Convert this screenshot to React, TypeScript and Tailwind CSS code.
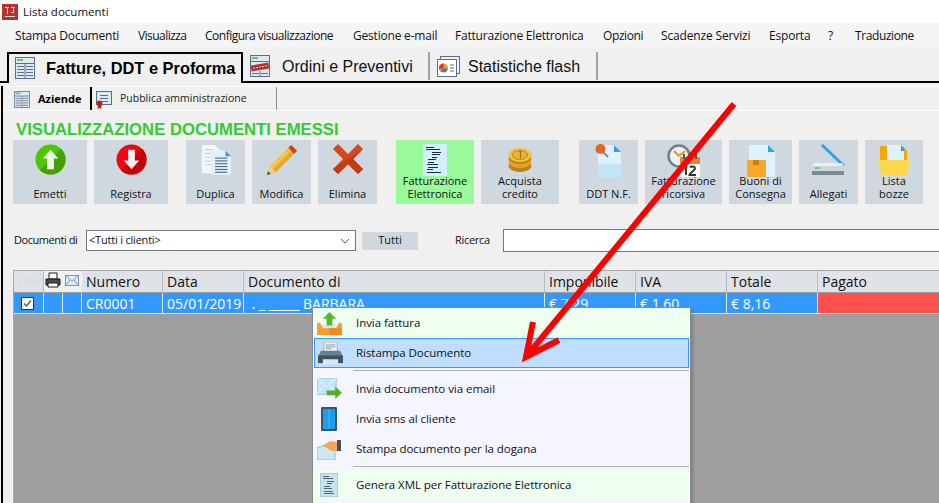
const Sheet = ({ small }: { small?: boolean }) => (
  <svg width={small ? 16 : 20} height={small ? 17 : 22} viewBox="0 0 20 22">
    <rect x=".5" y=".5" width="19" height="21" fill="#dfe9f3" stroke="#56708c" />
    <rect x="2" y="2" width="6" height="2" fill="#5fc35f" />
    <path d="M.5 6.500h19M2 9.500h7M2 12.500h7M2 15.500h7M2 18.500h7M11 9.500h7M11 12.500h7M11 15.500h7M11 18.500h7M10 6.500v15" stroke="#56708c" />
  </svg>
);

const Tab2Icon = () => (
  <svg width="20" height="22" viewBox="0 0 20 22">
    <rect x=".5" y=".5" width="19" height="21" fill="#dfe9f3" stroke="#56708c" />
    <rect x="2" y="2" width="6" height="2" fill="#5fc35f" />
    <path d="M.5 6.500h19M2 18.500h7M11 18.500h7M10 16v6" stroke="#56708c" />
    <rect x="1" y="9" width="18" height="6" fill="#b5312c" transform="rotate(-10 10 12)" />
    <path d="M3 12h14" stroke="#f4d6d0" strokeDasharray="2 1" transform="rotate(-10 10 12)" />
  </svg>
);

const Tab3Icon = () => (
  <svg width="24" height="23" viewBox="0 0 24 23">
    <rect x="4.500" y="1.500" width="19" height="17" fill="#eef3f8" stroke="#56708c" />
    <rect x="1.500" y="4.500" width="19" height="17" fill="#fff" stroke="#56708c" />
    <circle cx="7.500" cy="13" r="4.500" fill="#e8a020" />
    <path d="M7.500 13V8.500a4.500 4.500 0 0 0-4.300 5.800z" fill="#d9342b" />
    <path d="M7.500 13l4.300 1.300a4.500 4.500 0 0 1-7 2z" fill="#2f7fd0" />
    <path d="M14 10h4M14 13h4M14 16h4" stroke="#56708c" />
  </svg>
);

const SubIcon2 = () => (
  <svg width="17" height="19" viewBox="0 0 17 19">
    <rect x="1.500" y="1.500" width="15" height="13" fill="#dfe9f3" stroke="#56708c" />
    <path d="M5 5.500h8M5 8.500h8M7 11.500h6" stroke="#56708c" />
    <circle cx="4.500" cy="13.500" r="3" fill="#c0201c" />
    <path d="M3 16l-.5 3 2-1 2 1-.5-3" fill="#c0201c" />
  </svg>
);

const Emetti = () => (
  <svg width="31" height="31" viewBox="0 0 32 32">
    <circle cx="16" cy="16" r="15.500" fill="#4cc800" />
    <path d="M27 5A15.500 15.500 0 0 1 5 27z" fill="#48a000" />
    <path d="M16 6l8 9h-4.500v11h-7V15H8z" fill="#f0f5ea" />
  </svg>
);

const Registra = () => (
  <svg width="31" height="31" viewBox="0 0 32 32">
    <circle cx="16" cy="16" r="15.500" fill="#f00810" />
    <path d="M27 5A15.500 15.500 0 0 1 5 27z" fill="#c40008" />
    <path d="M16 26l-8-9h4.500V6h7v11H24z" fill="#f8ecec" />
  </svg>
);

const Duplica = () => (
  <svg width="32" height="32" viewBox="0 0 32 34">
    <path d="M1 1h14l6 6v24H1z" fill="#f3f6f8" />
    <path d="M4 6h9M4 10h12M4 14h12M4 18h12M4 22h12" stroke="#c4cdd4" />
    <path d="M11 7h15l6 6v20H11z" fill="#dff1fb" />
    <path d="M26 7l6 6h-6z" fill="#2aa3e8" />
    <path d="M15 15h13M15 18h13M15 21h13M15 24h13M15 27h13M15 30h13" stroke="#33506a" />
  </svg>
);

const Modifica = () => (
  <svg width="33" height="33" viewBox="0 0 34 34">
    <path d="M2 32l3-9L25 3l6 6L11 29z" fill="#f6c445" />
    <path d="M8 26L28 6l3 3L11 29z" fill="#e8a52c" />
    <path d="M25 3l3-3 6 6-3 3z" fill="#c9451c" transform="translate(-1 1)" />
    <path d="M2 32l3-9 6 6z" fill="#ecc9a0" />
    <path d="M2 32l1-4 3 3z" fill="#4a4a4a" />
  </svg>
);

const Elimina = () => (
  <svg width="30" height="30" viewBox="0 0 30 30">
    <path d="M5 0l10 10L25 0l5 5-10 10 10 10-5 5-10-10L5 30l-5-5 10-10L0 5z" fill="#d9451c" />
    <path d="M30 5L20 15l10 10-5 5-10-10L5 30l-5-5 15-10z" fill="#bf3c14" />
  </svg>
);

const Fattura = () => (
  <svg width="24" height="32" viewBox="0 0 24 32">
    <rect width="24" height="32" fill="#d3effb" />
    <path d="M3 3.500h8M3 5.500h14M9 8.500h9M9 10.500h8M9 13.500h5M5 15.500h8M5 18.500h6M4 20.500h11M5 23.500h10M4 25.500h6M4 28.500h14" stroke="#1e2c38" />
  </svg>
);

const FatturaSmall = () => (
  <svg width="18" height="24" viewBox="0 0 18 24">
    <rect width="18" height="24" fill="#c6e3f2" stroke="#8fb8d0" />
    <path d="M3 3.500h6M3 5.500h10M7 8.500h7M7 10.500h5M4 13.500h6M4 15.500h8M4 18.500h9M4 20.500h10" stroke="#55636e" />
  </svg>
);

const Coins = () => (
  <svg className="mt-[4px]" width="24" height="24" viewBox="0 0 24 24">
    <ellipse cx="12" cy="18" rx="11.500" ry="6" fill="#b9821a" />
    <ellipse cx="12" cy="14" rx="11.500" ry="6" fill="#e0a62a" />
    <ellipse cx="12" cy="10" rx="11.500" ry="6" fill="#b9821a" />
    <ellipse cx="12" cy="7" rx="11.500" ry="7" fill="#f2c141" />
    <ellipse cx="12" cy="7" rx="7.500" ry="4.500" fill="#e9b233" stroke="#b9821a" />
    <path d="M11 4l1.500-1v7" fill="none" stroke="#a06b10" />
  </svg>
);

const Ddt = () => (
  <svg width="27" height="33" viewBox="0 0 27 33">
    <path d="M3 1h16l7 7v25H3z" fill="#dff1fb" />
    <path d="M19 1l7 7h-7z" fill="#2aa3e8" />
    <path d="M3 20h23v13H3z" fill="#c4e5f7" />
    <circle cx="5.500" cy="5" r="5" fill="#e0662a" />
    <path d="M8 8l5 5" stroke="#8a8a8a" strokeWidth="2" />
  </svg>
);

const Ricorsiva = () => (
  <svg width="34" height="33" viewBox="0 0 34 33">
    <circle cx="12" cy="12" r="10.500" fill="#eef1f3" stroke="#71828e" strokeWidth="2.500" />
    <path d="M12 12l6-5M12 12L7 7" stroke="#e8912c" strokeWidth="2" />
    <rect x="13" y="13" width="20" height="20" fill="#fff" />
    <rect x="13" y="13" width="20" height="7" fill="#e8832a" />
    <path d="M17 10v5M29 10v5" stroke="#555" strokeWidth="2" />
    <path d="M17 23l2-1.500V31M23 23.500c2-2 5-1 5 1 0 2-5 4-5.500 6.500H29" fill="none" stroke="#333" strokeWidth="2" />
  </svg>
);

const Buoni = () => (
  <svg width="28" height="33" viewBox="0 0 28 33">
    <path d="M2 1h19l7 7v25H2z" fill="#dff1fb" />
    <path d="M21 1l7 7h-7z" fill="#2aa3e8" />
    <rect y="16" width="19" height="17" fill="#f6a828" />
    <rect x="6" y="16" width="6" height="5" fill="#d07a14" />
  </svg>
);

const Allegati = () => (
  <svg width="33" height="31" viewBox="0 0 33 31">
    <path d="M10 1l22 21" stroke="#2aa3e8" strokeWidth="3" />
    <path d="M0 22h32v6H0z" fill="#cdd6db" />
    <path d="M2 19h28l2 3H0z" fill="#eceff1" />
    <path d="M0 27h32v4H0z" fill="#7a8b96" />
    <path d="M3 24h2M6 24h2" stroke="#3fbf5f" strokeWidth="1.500" />
  </svg>
);

const Bozze = () => (
  <svg width="32" height="31" viewBox="0 0 32 31">
    <rect x="2" y="2" width="9" height="16" fill="#f5a800" />
    <path d="M9 1h14l6 6v14H9z" fill="#dff1fb" />
    <path d="M23 1l6 6h-6z" fill="#2aa3e8" />
    <rect x="26" y="6" width="3" height="10" fill="#f5a800" />
    <path d="M0 16h32l-3 15H3z" fill="#ffd84d" />
  </svg>
);

const Printer = () => (
  <svg width="16" height="16" viewBox="0 0 16 16">
    <path d="M4 1h8v6H4z" fill="#fff" stroke="#1b1b1b" />
    <path d="M1 7h14v6H1z" fill="#4a4a4a" stroke="#1b1b1b" />
    <path d="M3 11h10v4H3z" fill="#fff" stroke="#1b1b1b" />
  </svg>
);

const Mail = () => (
  <svg width="14" height="11" viewBox="0 0 14 11">
    <rect x=".5" y=".5" width="13" height="10" fill="#e3edf5" stroke="#7b93a8" />
    <path d="M.5.500L7 6l6.500-5.500M.5 10.500L5 5M13.500 10.500L9 5" fill="none" stroke="#7b93a8" />
  </svg>
);

const InviaFattura = () => (
  <svg width="25" height="23" viewBox="0 0 26 24">
    <path d="M3 13h20v5H3z" fill="#dfe6ea" />
    <path d="M0 12l3-1 3 6h14l3-6 3 1v12H0z" fill="#f59f2e" />
    <path d="M13 17h13v7H13z" fill="#ef8a1f" />
    <path d="M13 0l7 7h-4v7h-6V7H6z" fill="#52b82a" />
  </svg>
);

const RistampaIcon = () => (
  <svg width="25" height="23" viewBox="0 0 26 24">
    <path d="M6 0h14v10H6z" fill="#eef2f4" stroke="#9fb0ba" />
    <path d="M8 3h10M8 5h10M8 7h6" stroke="#8ba0ae" />
    <path d="M3 9h20l3 6H0z" fill="#6b7f8c" />
    <path d="M0 14h26v8H0z" fill="#3e5260" />
    <path d="M5 18h16v5H5z" fill="#dbe5ea" />
  </svg>
);

const EmailIcon = () => (
  <svg width="25" height="22" viewBox="0 0 26 23">
    <rect y="0" width="20" height="17" fill="#c2e6f8" stroke="#8fc8e6" />
    <path d="M0 0l10 9 10-9M0 17l7-9M20 17l-7-9" fill="none" stroke="#eef8fd" />
    <path d="M10 13h9V9l7 6.500L19 22v-4h-9z" fill="#56ae28" />
  </svg>
);

const SmsIcon = () => (
  <svg width="16" height="24" viewBox="0 0 16 24">
    <rect width="16" height="24" rx="1" fill="#3f5263" />
    <rect x="2" y="2" width="12" height="20" fill="#1e9df0" />
    <path d="M8 2v20" stroke="#4fb6f7" />
  </svg>
);

const DoganaIcon = () => (
  <svg width="24" height="21" viewBox="0 0 24 21">
    <path d="M0 9l10-4h8v16H0z" fill="#cfe6f5" stroke="#8fbcd9" />
    <path d="M6 7l7-5 7 1v9h-5z" fill="#f2a65a" />
    <rect x="20" y="1" width="4" height="11" fill="#3f5263" />
  </svg>
);

type Btn = { label: string; cls: string; icon: React.ReactNode };
const toolbar: Btn[] = [
  { label: "Emetti", cls: "w-[74px] bg-[#cfd8de]", icon: <Emetti /> },
  { label: "Registra", cls: "w-[74px] ml-[7px] bg-[#cfd8de]", icon: <Registra /> },
  { label: "Duplica", cls: "w-[59px] ml-[18px] bg-[#cfd8de]", icon: <Duplica /> },
  { label: "Modifica", cls: "w-[59px] ml-[7px] bg-[#cfd8de]", icon: <Modifica /> },
  { label: "Elimina", cls: "w-[59px] ml-[7px] bg-[#cfd8de]", icon: <Elimina /> },
  { label: "Fatturazione\nElettronica", cls: "w-[78px] ml-[19px] bg-[#99fb99]", icon: <Fattura /> },
  { label: "Acquista\ncredito", cls: "w-[78px] ml-[7px] bg-[#cfd8de]", icon: <Coins /> },
  { label: "DDT N.F.", cls: "w-[59px] ml-[20px] bg-[#cfd8de]", icon: <Ddt /> },
  { label: "Fatturazione\nricorsiva", cls: "w-[77px] ml-[7px] bg-[#cfd8de]", icon: <Ricorsiva /> },
  { label: "Buoni di\nConsegna", cls: "w-[63px] ml-[7px] bg-[#cfd8de]", icon: <Buoni /> },
  { label: "Allegati", cls: "w-[59px] ml-[7px] bg-[#cfd8de]", icon: <Allegati /> },
  { label: "Lista\nbozze", cls: "w-[58px] ml-[7px] bg-[#cfd8de]", icon: <Bozze /> },
];

const menus = [
  { t: "Stampa Documenti", c: "w-[123px] tracking-[-0.2px]" },
  { t: "Visualizza", c: "w-[67px] tracking-[-0.55px]" },
  { t: "Configura visualizzazione", c: "w-[148px] tracking-[-0.5px]" },
  { t: "Gestione e-mail", c: "w-[102px] tracking-[-0.2px]" },
  { t: "Fatturazione Elettronica", c: "w-[148px] tracking-[-0.2px]" },
  { t: "Opzioni", c: "w-[58px] tracking-[-0.4px]" },
  { t: "Scadenze Servizi", c: "w-[108px] tracking-[-0.15px]" },
  { t: "Esporta", c: "w-[59px] tracking-[-0.2px]" },
  { t: "?", c: "w-[27px]" },
  { t: "Traduzione", c: "w-[60px] tracking-[-0.4px]" },
];
const ui = "font-['Open_Sans','Noto_Sans',sans-serif]";
const gridCols = "grid grid-cols-[29px_1px_18px_1px_18px_1px_80px_1px_80px_1px_300px_1px_90px_1px_90px_1px_90px_1px_1fr]";

const HeadCell = ({ children }: { children?: React.ReactNode }) => (
  <div className="flex items-center pl-[4px] overflow-hidden">{children}</div>
);
const Rule = ({ cls }: { cls: string }) => <div className={cls} />;

const MenuItem = ({ icon, text, cls }: { icon: React.ReactNode; text: string; cls: string }) => (
  <div className={`flex items-center h-[30px] ${cls}`}>
    <div className="w-[32px] flex justify-center shrink-0">{icon}</div>
    <span className="ml-[11px] text-[11.500px] tracking-[-0.05px] text-[#111]">{text}</span>
  </div>
);

export default function App() {
  const hcell = "bg-[#dfe3e7]";
  const hsep = "bg-[#b8bcc0]";
  const rsep = "bg-[#d8e8ff]";
  return (
    <div className={`relative w-[939px] h-[503px] overflow-hidden bg-[#f0f0f0] ${ui}`}>
      <div className="h-[23px] bg-white flex items-center pl-[2px]">
        <svg width="16" height="16" viewBox="0 0 16 16">
          <rect width="16" height="16" fill="#b8312c" />
          <path d="M3 3h4v1H6v6H5V4H3zM9 3h4v1h-1v5H9V8h2V4H9zM3 12h10v1H3z" fill="#f2dcdc" />
        </svg>
        <span className="ml-[5px] text-[11.500px] text-[#111] leading-none">Lista documenti</span>
      </div>

      <div className="h-[24px] bg-[#f5f5f5] flex items-center pl-[15px] pt-px text-[12px] text-[#111]">
        {menus.map((m) => (
          <span key={m.t} className={`shrink-0 whitespace-nowrap ${m.c}`}>{m.t}</span>
        ))}
      </div>

      <div className="h-[36px] flex items-end border-b-2 border-black pl-[7px] font-['Liberation_Sans',sans-serif]">
        <div className="h-[31px] w-[236px] -mb-[2px] pb-[2px] bg-[#f0f0f0] border-2 border-b-0 border-black flex items-center pl-[6px] box-border">
          <Sheet />
          <span className="ml-[11px] pt-px text-[16.400px] font-bold text-black whitespace-nowrap">Fatture, DDT e Proforma</span>
        </div>
        <div className="h-[28px] w-[187px] flex items-center pl-[7px] border-r-2 border-[#a0a0a0] mb-px">
          <Tab2Icon />
          <span className="ml-[12px] pt-[2px] text-[16px] text-[#111] whitespace-nowrap">Ordini e Preventivi</span>
        </div>
        <div className="h-[28px] w-[168px] flex items-center pl-[6px] border-r-2 border-[#a0a0a0] mb-px">
          <Tab3Icon />
          <span className="ml-[8px] pt-[2px] text-[16px] text-[#111] whitespace-nowrap">Statistiche flash</span>
        </div>
      </div>

      <div className="ml-px border-l-2 border-black h-[421px]">
        <div className="mt-[3px] h-[25px] border-y border-white flex items-stretch pl-[5px]">
          <div className="w-[84px] flex items-center pl-[6px] pt-px border-r-2 border-black">
            <Sheet small />
            <span className="ml-[8px] text-[11px] font-bold text-black">Aziende</span>
          </div>
          <div className="w-[185px] flex items-center pl-[3px] pt-px border-r border-[#909090]">
            <SubIcon2 />
            <span className="ml-[8px] text-[10.500px] text-[#222]">Pubblica amministrazione</span>
          </div>
        </div>

        <div className="mt-[9px] pl-[13px] h-[20px] text-[16.700px] leading-[20px] font-bold text-[#33cc33] font-['Liberation_Sans',sans-serif] whitespace-nowrap">
          VISUALIZZAZIONE DOCUMENTI EMESSI
        </div>

        <div className="pl-[10px] flex">
          {toolbar.map((b) => (
            <div key={b.label} className={`relative h-[64px] shrink-0 flex flex-col items-center ${b.cls}`}>
              <div className="h-[40px] pt-[4px] flex justify-center">{b.icon}</div>
              <div className="absolute bottom-[4px] inset-x-0 text-center text-[11px] leading-[13px] text-[#111] whitespace-pre-line">
                {b.label}
              </div>
            </div>
          ))}
        </div>

        <div className="mt-[25px] pl-[11px] flex items-center h-[23px]">
          <span className="w-[72px] text-[11px] tracking-[-0.45px] text-[#111] whitespace-nowrap">Documenti di</span>
          <div className="w-[270px] h-[21px] bg-white border border-[#777] flex items-center justify-between pl-[2px] pr-[5px] text-[11px] tracking-[-0.2px] text-[#111]">
            <span>&lt;Tutti i clienti&gt;</span>
            <svg width="10" height="6" viewBox="0 0 10 6"><path d="M1 1l4 4 4-4" fill="none" stroke="#555" /></svg>
          </div>
          <div className="ml-[6px] w-[56px] h-[18px] bg-[#cfd8de] flex items-center justify-center text-[11px] text-[#111]">Tutti</div>
          <span className="ml-[37px] w-[48px] text-[11px] tracking-[-0.3px] text-[#111]">Ricerca</span>
          <div className="flex-1 h-[23px] bg-white border border-[#777] border-r-0" />
        </div>

        <div className="mt-[18px] ml-[10px] h-[233px] bg-[#9e9e9e] border-t border-l border-[#a8a8a8] text-[14px]">
          <div className={`${gridCols} h-[21px] ${hcell} text-[#111]`}>
            <HeadCell><span className="text-[#d7dadd] text-[12px]">chec</span></HeadCell>
            <Rule cls={hsep} />
            <div className="bg-[#f0f0f0] flex justify-center pt-px"><Printer /></div>
            <Rule cls="bg-[#f0f0f0]" />
            <div className="bg-[#f0f0f0] flex justify-center pt-[4px]"><Mail /></div>
            <Rule cls="bg-[#f0f0f0]" />
            <HeadCell>Numero</HeadCell>
            <Rule cls={hsep} />
            <HeadCell>Data</HeadCell>
            <Rule cls={hsep} />
            <HeadCell>Documento di</HeadCell>
            <Rule cls={hsep} />
            <HeadCell>Imponibile</HeadCell>
            <Rule cls={hsep} />
            <HeadCell>IVA</HeadCell>
            <Rule cls={hsep} />
            <HeadCell>Totale</HeadCell>
            <Rule cls={hsep} />
            <HeadCell>Pagato</HeadCell>
          </div>
          <div className={`${gridCols} h-[21px] mt-px border-b border-[#e8e8e8] bg-[#3399ff] text-white`}>
            <div className="flex items-center justify-center pr-[2px]">
              <svg width="13" height="13" viewBox="0 0 13 13">
                <rect x=".5" y=".5" width="12" height="12" fill="#fff" stroke="#333" />
                <path d="M3 6.500l2.500 2.500L10 3.500" fill="none" stroke="#555" strokeWidth="1.300" />
              </svg>
            </div>
            <Rule cls={rsep} />
            <div />
            <Rule cls={rsep} />
            <div />
            <Rule cls={rsep} />
            <HeadCell>CR0001</HeadCell>
            <Rule cls={rsep} />
            <HeadCell>05/01/2019</HeadCell>
            <Rule cls={rsep} />
            <HeadCell><span className="whitespace-pre"> . _ _____ BARBARA</span></HeadCell>
            <Rule cls={rsep} />
            <HeadCell>€ 7,29</HeadCell>
            <Rule cls={rsep} />
            <HeadCell>€ 1,60</HeadCell>
            <Rule cls={rsep} />
            <HeadCell>€ 8,16</HeadCell>
            <Rule cls={rsep} />
            <div className="bg-[#ff5050]" />
          </div>
        </div>
      </div>

      <div className="absolute left-[312px] top-[307px] w-[379px] h-[210px] bg-[#f5f5ff] border border-[#8a8a8a] shadow-[2px_2px_3px_rgba(0,0,0,0.2)]">
        <MenuItem icon={<InviaFattura />} text="Invia fattura" cls="bg-[#efffef]" />
        <div className="mx-px h-[30px] bg-[#c0deff] border border-[#3399ff] flex items-center">
          <div className="w-[30px] flex justify-center shrink-0"><RistampaIcon /></div>
          <span className="ml-[11px] text-[11.500px] tracking-[-0.05px] text-[#111]">Ristampa Documento</span>
        </div>
        <div className="mt-[2px] ml-[40px] mr-px h-px bg-[#b0b0b0]" />
        <div className="h-[3px]" />
        <MenuItem icon={<EmailIcon />} text="Invia documento via email" cls="" />
        <MenuItem icon={<SmsIcon />} text="Invia sms al cliente" cls="" />
        <MenuItem icon={<DoganaIcon />} text="Stampa documento per la dogana" cls="" />
        <div className="mt-[2px] ml-[40px] mr-px h-px bg-[#b0b0b0]" />
        <div className="h-[3px]" />
        <MenuItem icon={<FatturaSmall />} text="Genera XML per Fatturazione Elettronica" cls="bg-[#efffef]" />
      </div>

      <svg className="absolute inset-0 pointer-events-none" width="939" height="503" viewBox="0 0 939 503">
        <path d="M734 104L535 346" stroke="#ff0000" strokeWidth="6" fill="none" />
        <path d="M533 322l-7 35 33-17" stroke="#ff0000" strokeWidth="6" fill="none" />
        <path d="M525 358l7-14 10 5z" fill="#ff0000" />
      </svg>
    </div>
  );
}
